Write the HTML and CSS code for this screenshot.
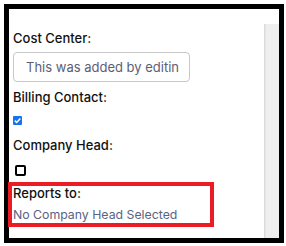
FILE: index.html
```html
<!DOCTYPE html>
<html>
<head>
  <title>Employee Details</title>
  <link rel="stylesheet" href="styles.css">
</head>
<body>
  <div class="frame">
    <div class="form-panel">
      <div class="field">
        <label class="field-label">Cost Center:</label>
        <div class="text-input">This was added by editin</div>
      </div>

      <div class="field">
        <label class="field-label">Billing Contact:</label>
        <span class="checkbox checked">
          <svg width="9" height="9" viewBox="0 0 9 9"><path d="M1.8 4.6 L3.7 6.5 L7.3 2.4" fill="none" stroke="#fff" stroke-width="1.5"/></svg>
        </span>
      </div>

      <div class="field">
        <label class="field-label">Company Head:</label>
        <span class="checkbox unchecked"></span>
      </div>

      <!-- highlighted field -->
      <div class="field highlight">
        <label class="field-label">Reports to:</label>
        <div class="field-value">No Company Head Selected</div>
      </div>
    </div>
    <div class="side-panel"></div>
  </div>
</body>
</html>
```

FILE: styles.css
```css
html, body {
  margin: 0;
  height: 100%;
  background: #fff;
}

body {
  font-family: Inter, 'Noto Sans', sans-serif;
  padding: 4px 2px 3px 4px;
  box-sizing: border-box;
}

.frame {
  display: flex;
  height: 100%;
  border: 5px solid #000;
  box-sizing: border-box;
  background: #fff;
}

.form-panel {
  flex: 1;
  padding: 20px 0 0 0;
}

/* Gray column on the right */
.side-panel {
  width: 15px;
  margin-top: 15px;
  background: #efefef;
  box-shadow: inset 2px 0 2px -1px rgba(0, 0, 0, 0.12);
}

.field {
  display: flex;
  flex-direction: column;
  align-items: flex-start;
  padding-left: 4px;
}

.field-label {
  font-size: 13px;
  font-weight: 500;
  line-height: 18px;
  color: #111;
  margin-bottom: 5px;
}

.text-input {
  width: 177px;
  height: 30px;
  box-sizing: border-box;
  border: 1px solid #c8c8c8;
  border-radius: 4px;
  padding-left: 12px;
  font-size: 13px;
  line-height: 28px;
  color: #5b6075;
  white-space: nowrap;
  overflow: hidden;
  margin-bottom: 6px;
}

.checkbox {
  display: block;
  box-sizing: border-box;
}

.checkbox.checked {
  width: 9px;
  height: 9px;
  margin: 5px 0 11px 0;
  background: #1a73e8;
  border-radius: 1px;
}

.checkbox.checked svg {
  display: block;
}

.checkbox.unchecked {
  width: 11px;
  height: 11px;
  margin: 6px 0 6px 2px;
  border: 2px solid #000;
  border-radius: 2px;
}

.highlight {
  width: 197px;
  border: 4px solid #ec1c24;
  margin-left: -1px;
  padding: 0 0 0 1px;
}

.highlight .field-label {
  line-height: 14px;
  margin-bottom: 7px;
}

.field-value {
  font-size: 12.3px;
  line-height: 16px;
  color: #5a6383;
}
```
